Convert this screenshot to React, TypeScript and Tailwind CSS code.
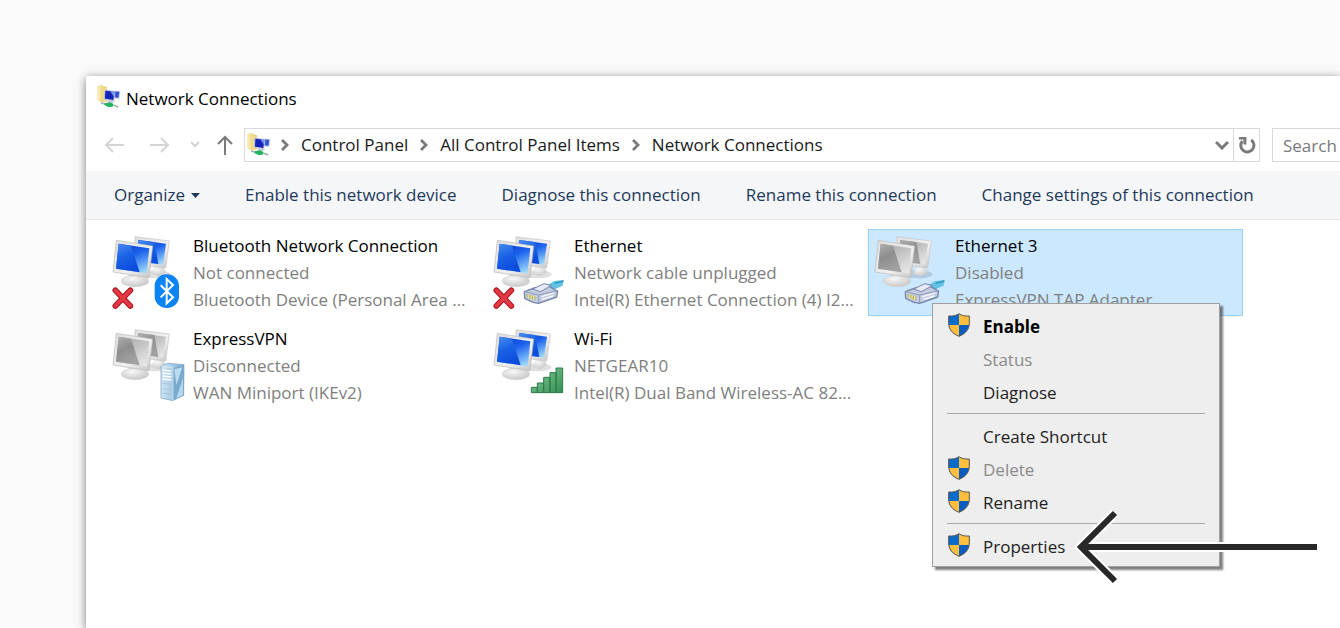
import React from 'react';
import clsx from 'clsx';

type Badge = 'bluetooth' | 'cable' | 'server' | 'signal';

interface Connection {
  name: string;
  status: string;
  device: string;
  badge: Badge;
  off?: boolean;
  error?: boolean;
  selected?: boolean;
}

interface MenuEntry {
  label: string;
  shield?: boolean;
  bold?: boolean;
  disabled?: boolean;
  separated?: boolean;
  pointed?: boolean;
}

const CRUMBS = ['Control Panel', 'All Control Panel Items', 'Network Connections'];

const COMMANDS = [
  'Enable this network device',
  'Diagnose this connection',
  'Rename this connection',
  'Change settings of this connection',
];

const CONNECTIONS: Connection[] = [
  { name: 'Bluetooth Network Connection', status: 'Not connected', device: 'Bluetooth Device (Personal Area ...', badge: 'bluetooth', error: true },
  { name: 'Ethernet', status: 'Network cable unplugged', device: 'Intel(R) Ethernet Connection (4) I2...', badge: 'cable', error: true },
  { name: 'Ethernet 3', status: 'Disabled', device: 'ExpressVPN TAP Adapter', badge: 'cable', off: true, selected: true },
  { name: 'ExpressVPN', status: 'Disconnected', device: 'WAN Miniport (IKEv2)', badge: 'server', off: true },
  { name: 'Wi-Fi', status: 'NETGEAR10', device: 'Intel(R) Dual Band Wireless-AC 82...', badge: 'signal' },
];

const MENU: MenuEntry[] = [
  { label: 'Enable', shield: true, bold: true },
  { label: 'Status', disabled: true },
  { label: 'Diagnose' },
  { label: 'Create Shortcut', separated: true },
  { label: 'Delete', shield: true, disabled: true },
  { label: 'Rename', shield: true },
  { label: 'Properties', shield: true, separated: true, pointed: true },
];

const Gradients: React.FC = () => (
  <svg width="0" height="0" className="absolute" aria-hidden="true">
    <defs>
      <linearGradient id="screen-on" x1="0.3" y1="0" x2="0.8" y2="1">
        <stop offset="0" stopColor="#0a3fd0" />
        <stop offset="0.4" stopColor="#1c62ec" />
        <stop offset="1" stopColor="#9fdcff" />
      </linearGradient>
      <linearGradient id="glare-on" x1="0" y1="0" x2="0.4" y2="1">
        <stop offset="0" stopColor="#4a8ef0" />
        <stop offset="0.5" stopColor="#1a62e6" />
        <stop offset="1" stopColor="#0d4cdc" />
      </linearGradient>
      <linearGradient id="screen-off" x1="0.2" y1="0" x2="0.9" y2="1">
        <stop offset="0" stopColor="#a8a8a8" />
        <stop offset="0.4" stopColor="#c0c0c0" />
        <stop offset="1" stopColor="#ebebeb" />
      </linearGradient>
      <linearGradient id="glare-off" x1="0" y1="0" x2="0.4" y2="1">
        <stop offset="0" stopColor="#b0b0b0" />
        <stop offset="0.5" stopColor="#8e8e8e" />
        <stop offset="1" stopColor="#a2a2a2" />
      </linearGradient>
      <linearGradient id="metal" x1="0" y1="0" x2="1" y2="1">
        <stop offset="0" stopColor="#dedede" />
        <stop offset="0.6" stopColor="#f0f0f0" />
        <stop offset="1" stopColor="#c4c4c4" />
      </linearGradient>
      <radialGradient id="stand" cx="0.4" cy="0.3" r="0.7">
        <stop offset="0" stopColor="#f8f8f8" />
        <stop offset="1" stopColor="#c8c8c8" />
      </radialGradient>
      <linearGradient id="bars" x1="0" y1="0" x2="1" y2="1">
        <stop offset="0" stopColor="#8fcba0" />
        <stop offset="1" stopColor="#2f8f50" />
      </linearGradient>
      <linearGradient id="server" x1="0" y1="0" x2="1" y2="0">
        <stop offset="0" stopColor="#cfe5f4" />
        <stop offset="1" stopColor="#7fb0d3" />
      </linearGradient>
      <linearGradient id="folder" x1="0" y1="0" x2="1" y2="0">
        <stop offset="0" stopColor="#fbf0b8" />
        <stop offset="1" stopColor="#e6c65c" />
      </linearGradient>
    </defs>
  </svg>
);

const BadgeArt: React.FC<{ badge: Badge }> = ({ badge }) => {
  if (badge === 'bluetooth') {
    return (
      <g>
        <rect x="149" y="136" width="73" height="101" rx="35" fill="#0a84f5" />
        <path d="M167 169 204 205 185 223V150l19 18-37 37" fill="none" stroke="#fff" strokeWidth="6" />
      </g>
    );
  }
  if (badge === 'cable') {
    return (
      <g strokeLinejoin="round">
        <path d="M178 172 205 156 233 153 230 170 206 181Z" fill="#63c3e4" />
        <path d="M206 163 232 156" stroke="#2a93bf" strokeWidth="4" />
        <path d="M115 188 145 177 190 172 215 187 212 204 158 223 141 220 116 208Z" fill="#c3cce0" stroke="#7686ad" strokeWidth="4" />
        <path d="M115 188 158 198 215 185M158 198V222" fill="none" stroke="#8e9bbb" strokeWidth="3" />
        <path d="M140 180 174 164 196 170 163 188Z" fill="#e6ebf6" stroke="#7686ad" strokeWidth="3" />
        <path d="M120 195 148 202V215L122 205Z" fill="#b9b86e" />
        <path d="M127 197V208M135 199V211M143 201V213" stroke="#f0edb0" strokeWidth="3" />
        <path d="M166 203 204 192M168 211 202 201" stroke="#f4f7fc" strokeWidth="4" />
      </g>
    );
  }
  if (badge === 'server') {
    return (
      <g>
        <path d="M168 132 188 124 237 128 236 220 203 236 168 228Z" fill="url(#server)" stroke="#6f9cbd" strokeWidth="2" />
        <path d="M204 138 237 129 236 220 203 236Z" fill="#79a9cc" />
        <path d="M208 142 232 136 214 190Z" fill="#b9dcf1" />
        <path d="M214 229 234 168V219Z" fill="#b5d6ec" />
        <path d="M173 144 199 147M173 153 199 156M173 162 199 165M173 171 199 174" stroke="#fff" strokeWidth="4" />
        <path d="M173 184 199 187M173 200 199 203M173 213 199 217" stroke="#a3c6df" strokeWidth="3" />
        <path d="M168 132 204 138V236" fill="none" stroke="#e8f4fb" strokeWidth="2" />
      </g>
    );
  }
  return (
    <g fill="url(#bars)" stroke="#2d7c48" strokeWidth="3">
      <path d="M136 196h18v16h-18zM154 183h19v29h-19zM173 166h19v46h-19zM192 152h18v60h-18zM210 138h20v74h-20z" />
    </g>
  );
};

const ConnectionIcon: React.FC<{ item: Connection }> = ({ item }) => {
  const screen = item.off ? 'url(#screen-off)' : 'url(#screen-on)';
  const glare = item.off ? 'url(#glare-off)' : 'url(#glare-on)';
  return (
    <svg viewBox="6 3 252 255" className="h-[85px] w-[84px] shrink-0" aria-hidden="true">
      <ellipse cx="155" cy="136" rx="42" ry="12" fill="#000" opacity="0.12" />
      <path d="M150 112 176 115 182 130 162 142 138 134Z" fill="url(#stand)" />
      <path d="M90 23 193 36 182 117 88 105Z" fill="url(#metal)" stroke="#c4c4c4" strokeWidth="2" strokeLinejoin="round" />
      <path d="M99 33 183 44 174 107 97 97Z" fill={screen} />
      <path d="M99 33 148 39 160 105 97 97Z" fill={glare} />
      <path d="M72 138 104 142 108 154H68Z" fill="#c4c4c4" />
      <ellipse cx="90" cy="156" rx="41" ry="17" fill="url(#stand)" stroke="#d2d2d2" strokeWidth="2" />
      <path d="M34 34 143 51 132 146 24 129Z" fill="url(#metal)" stroke="#b8b8b8" strokeWidth="2" strokeLinejoin="round" />
      <path d="M41 44 133 58 125 133 33 119Z" fill={screen} />
      <path d="M41 44 78 50 104 130 33 119Z" fill={glare} />
      {item.error && (
        <g strokeLinecap="round">
          <path d="M31 184 76 231M76 184 31 231" stroke="#a9121d" strokeWidth="17" />
          <path d="M31 184 76 231M76 184 31 231" stroke="#e33845" strokeWidth="11" />
        </g>
      )}
      <BadgeArt badge={item.badge} />
    </svg>
  );
};

const FolderIcon: React.FC = () => (
  <svg viewBox="0 0 72 72" className="size-6 shrink-0" aria-hidden="true">
    <path d="M2 3 15 1 18 4 29 7V48L13 52 2 45Z" fill="url(#folder)" stroke="#ddc777" strokeWidth="1" />
    <path d="M11 7 29 10V48L13 52Z" fill="#efd98a" />
    <path d="M42 17 69 19 66 41 42 38Z" fill="#9db7ee" stroke="#cfd6e4" strokeWidth="2" />
    <path d="M52 19 67 21 64 38 52 36Z" fill="#3653cf" />
    <path d="M24 15 54 20 50 47 22 42Z" fill="#1524b8" stroke="#bfc9df" strokeWidth="3" />
    <path d="M40 19 52 21 50 35Z" fill="#6f92ee" />
    <ellipse cx="42" cy="49" rx="11" ry="5" fill="#c3cbd7" />
    <path d="M12 54 33 59M50 61 64 66" stroke="#9fb3ae" strokeWidth="5" />
    <path d="M24 55 38 52 50 57 47 65 34 66 22 60Z" fill="#1fb45d" />
  </svg>
);

const Shield: React.FC = () => (
  <svg viewBox="0 0 66 72" className="mb-1 h-6 w-[22px]" aria-hidden="true">
    <path d="M33 2C25 8 14 10 2 9V30C2 50 14 62 33 70Z" fill="#0b6bcb" />
    <path d="M33 2C41 8 52 10 64 9V30C64 50 52 62 33 70Z" fill="#ffbe3c" />
    <path d="M3 36C5 52 16 63 33 70V36Z" fill="#ffbe3c" />
    <path d="M63 36C61 52 50 63 33 70V36Z" fill="#0b5cc0" />
    <path d="M33 2C25 8 14 10 2 9V30C2 50 14 62 33 70 52 62 64 50 64 30V9C52 10 41 8 33 2Z" fill="none" stroke="#555" strokeWidth="3" />
  </svg>
);

const Crumb: React.FC = () => (
  <svg viewBox="0 0 8 12" className="h-3 w-2 shrink-0" aria-hidden="true">
    <path d="M1 1 6 6 1 11" fill="none" stroke="#7a7a7a" strokeWidth="2.8" />
  </svg>
);

const PointerArrow: React.FC = () => (
  <svg viewBox="0 0 246 78" className="pointer-events-none absolute top-1/2 left-[141px] h-[78px] w-[246px] -translate-y-1/2" aria-hidden="true">
    <path d="M41 5 7 39 41 73M7 39H243" fill="none" stroke="#fff" strokeWidth="10" />
    <path d="M41 5 7 39 41 73M7 39H243" fill="none" stroke="#282828" strokeWidth="6" />
  </svg>
);

const ContextMenu: React.FC = () => (
  <ul
    role="menu"
    className="absolute top-[74px] left-16 z-10 w-72 border border-[#a0a0a0] bg-[#eeeeee] pt-[6px] pb-[3px] shadow-[3px_3px_2px_rgba(0,0,0,0.5)]"
  >
    {MENU.map((entry) => (
      <li key={entry.label} role="none">
        {entry.separated && <hr className="mx-[14px] mt-1 mb-[6px] border-[#a8a8a8]" />}
        <div className="relative">
          <button
            role="menuitem"
            disabled={entry.disabled}
            className={clsx(
              'flex h-[33px] w-full items-center pl-[15px] text-left',
              entry.bold && 'font-bold',
              entry.disabled ? 'text-[#8a8a8a]' : entry.bold ? 'text-black' : 'text-[#222]',
            )}
          >
            <span className="w-[35px]">{entry.shield && <Shield />}</span>
            {entry.label}
          </button>
          {entry.pointed && <PointerArrow />}
        </div>
      </li>
    ))}
  </ul>
);

const NavBar: React.FC = () => (
  <div className="flex h-[34px] items-center">
    <div className="flex w-[158px] shrink-0 items-center pl-[18px]">
      <button aria-label="Back" className="mr-[26px]">
        <svg viewBox="0 0 20 18" className="h-[18px] w-5"><path d="M9 2 2 9l7 7M2 9h18" fill="none" stroke="#d4d4d4" strokeWidth="2" /></svg>
      </button>
      <button aria-label="Forward" className="mr-5">
        <svg viewBox="0 0 20 18" className="h-[18px] w-5"><path d="M11 2l7 7-7 7M18 9H0" fill="none" stroke="#d4d4d4" strokeWidth="2" /></svg>
      </button>
      <button aria-label="Recent locations" className="mr-4">
        <svg viewBox="0 0 10 8" className="h-2 w-[10px]"><path d="M1 1l4 4 4-4" fill="none" stroke="#d4d4d4" strokeWidth="2" /></svg>
      </button>
      <button aria-label="Up">
        <svg viewBox="0 0 18 20" className="h-5 w-[18px]"><path d="M2 9l7-7 7 7M9 2v18" fill="none" stroke="#7a7a7a" strokeWidth="2" /></svg>
      </button>
    </div>

    <nav aria-label="Address" className="flex h-full flex-1 items-center border border-[#d9d9d9] pl-[2px] whitespace-nowrap">
      <FolderIcon />
      <div className="flex flex-1 items-center gap-3 pl-[10px]">
        {CRUMBS.map((crumb) => (
          <React.Fragment key={crumb}>
            <Crumb />
            <a href="#" className="text-[#1a1a1a]">{crumb}</a>
          </React.Fragment>
        ))}
      </div>
      <button aria-label="Previous locations" className="mr-1">
        <svg viewBox="0 0 14 10" className="h-[10px] w-[14px]"><path d="M1 2l6 6 6-6" fill="none" stroke="#7a7a7a" strokeWidth="3" /></svg>
      </button>
      <button aria-label="Refresh" className="flex h-full w-[26px] items-center justify-center border-l border-[#d9d9d9] pl-px">
        <svg viewBox="0 0 18 18" className="size-[18px]">
          <path d="M13.2 4A6.6 6.6 0 1 1 4.4 5" fill="none" stroke="#7a7a7a" strokeWidth="3" />
          <path d="M1 1H8.4V8.4H5.4V3.6H1Z" fill="#7a7a7a" />
        </svg>
      </button>
    </nav>

    <input
      type="text"
      aria-label="Search"
      placeholder="Search"
      className="ml-3 h-full w-[68px] border-y border-l border-[#d9d9d9] pl-[10px] placeholder:text-[#7a7a7a]"
    />
  </div>
);

const App: React.FC = () => {
  return (
    <div className="flex min-h-screen overflow-hidden bg-[#fafafa] pt-[76px] pl-[86px] font-['Open_Sans','Noto_Sans',sans-serif] text-[17px]">
      <Gradients />
      <main className="min-w-0 flex-1 bg-white shadow-[0_2px_9px_rgba(0,0,0,0.5)]">
        <header className="flex h-[52px] items-start gap-[5px] pt-[9px] pl-[11px]">
          <FolderIcon />
          <h1 className="leading-[27px] text-black">Network Connections</h1>
        </header>

        <NavBar />

        <div role="toolbar" aria-label="Commands" className="mt-[9px] flex h-[49px] items-center gap-[45px] border-b border-[#e5e8eb] bg-[#f4f6f8] pl-7 whitespace-nowrap text-[#1e395b]">
          <button className="flex items-center gap-[6px]">
            Organize
            <svg viewBox="0 0 9 5" className="h-[5px] w-[9px]" aria-hidden="true"><path d="M0 0H9L4.5 5Z" fill="#1e395b" /></svg>
          </button>
          {COMMANDS.map((command) => (
            <button key={command}>{command}</button>
          ))}
        </div>

        <ul className="flex flex-wrap gap-[6px] pt-[9px] pr-16 pl-5">
          {CONNECTIONS.map((item) => (
            <li key={item.name} className="relative w-[375px]">
              <button
                className={clsx(
                  'flex h-[87px] w-full overflow-hidden border text-left leading-[27px] whitespace-nowrap',
                  item.selected ? 'border-[#99d1ff] bg-[#cce8ff]' : 'border-transparent',
                )}
              >
                <ConnectionIcon item={item} />
                <span className="flex flex-col pt-[2px] pl-[2px] text-[#808080]">
                  <span className="text-black">{item.name}</span>
                  <span>{item.status}</span>
                  <span>{item.device}</span>
                </span>
              </button>
              {item.selected && <ContextMenu />}
            </li>
          ))}
        </ul>
      </main>
    </div>
  );
};

export default App;
